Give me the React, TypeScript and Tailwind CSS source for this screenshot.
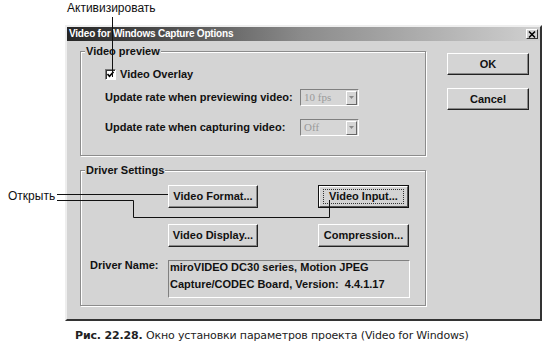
const ui = "font-['Liberation_Sans',Arial,sans-serif] font-bold text-[11px] text-[#111]";

function WinButton({ label, w, isDefault }: { label: string; w: string; isDefault?: boolean }) {
  if (isDefault) {
    return (
      <div className={`${w} h-[23px] border border-[#111] flex`}>
        <div className="flex-1 flex items-center justify-center border border-t-white border-l-white border-b-[#555] border-r-[#555] bg-[#d4d4d4]">
          <span className="px-[5px] leading-[13px] outline outline-1 outline-dotted outline-[#333]">{label}</span>
        </div>
      </div>
    );
  }
  return (
    <div
      className={`${w} h-[23px] flex items-center justify-center bg-[#d4d4d4] border border-t-white border-l-white border-b-[#222] border-r-[#222] shadow-[inset_-1px_-1px_0_#888]`}
    >
      {label}
    </div>
  );
}

function Combo({ value }: { value: string }) {
  return (
    <div className="w-[59px] h-[17px] flex items-center border border-t-[#808080] border-l-[#808080] border-b-white border-r-white bg-[#d6d6d6]">
      <span className="flex-1 pl-[3px] font-normal text-[#9a9a9a] font-['Liberation_Serif',serif] text-[11px]">{value}</span>
      <div className="w-[11px] h-[14px] mr-[1px] flex items-center justify-center border border-t-white border-l-white border-b-[#666] border-r-[#666]">
        <svg width="5" height="3" viewBox="0 0 5 3">
          <path d="M0 0H5L2.5 3Z" fill="#8a8a8a" />
        </svg>
      </div>
    </div>
  );
}

function Group({ title, h, children }: { title: string; h: string; children: React.ReactNode }) {
  return (
    <div className={`w-[346px] ${h} border border-[#8c8c8c] shadow-[inset_1px_1px_0_#fff,1px_1px_0_#fff]`}>
      <div className="w-fit -mt-[7px] ml-[4px] px-[1px] bg-[#d4d4d4] leading-[13px]">{title}</div>
      {children}
    </div>
  );
}

export default function App() {
  return (
    <div className="relative w-[542px] h-[350px] bg-white overflow-hidden">
      <div className="h-[25px] pl-[67px] pt-[1px] font-['Liberation_Sans',Arial,sans-serif] text-[12px] leading-[14px] text-[#111]">
        Активизировать
      </div>

      <div className={`ml-[65px] w-[477px] h-[296px] bg-[#d4d4d4] border-2 border-t-[#eeeeee] border-l-[#eeeeee] border-b-[#333] border-r-[#333] ${ui}`}>
        <div className="h-[14px] flex items-center justify-between pl-[2px] pr-[2px] bg-linear-to-r from-[#262626] via-[#8c8c8c] to-[#d0d0d0]">
          <span className="text-white text-[10px] leading-[12px] tracking-[-0.2px]">Video for Windows Capture Options</span>
          <div className="w-[12px] h-[10px] flex items-center justify-center bg-[#d4d4d4] border border-t-white border-l-white border-b-[#333] border-r-[#333]">
            <svg width="8" height="7" viewBox="0 0 8 7">
              <path d="M1 0.5L7 6.5M7 0.5L1 6.5" stroke="#000" strokeWidth="1.5" />
            </svg>
          </div>
        </div>

        <div className="flex pl-[13px] pt-[10px] gap-[21px]">
          <div className="flex flex-col">
            <Group title="Video preview" h="h-[105px]">
              <div className="flex items-center mt-[10px] pl-[24px] h-[13px]">
                <div className="w-[11px] h-[11px] flex items-center justify-center bg-white border border-t-[#777] border-l-[#777] border-b-white border-r-white shadow-[inset_1px_1px_0_#333]">
                  <svg width="7" height="7" viewBox="0 0 7 7">
                    <path d="M0.5 3L2.5 5.2L6.5 0.8" stroke="#000" strokeWidth="1.6" fill="none" />
                  </svg>
                </div>
                <span className="ml-[4px]">Video Overlay</span>
              </div>
              <div className="flex items-center mt-[8px] pl-[24px] h-[17px]">
                <span className="w-[195px]">Update rate when previewing video:</span>
                <Combo value="10 fps" />
              </div>
              <div className="flex items-center mt-[13px] pl-[24px] h-[17px]">
                <span className="w-[195px]">Update rate when capturing video:</span>
                <Combo value="Off" />
              </div>
            </Group>

            <div className="mt-[14px]">
              <Group title="Driver Settings" h="h-[136px]">
                <div className="flex mt-[8px] pl-[87px] gap-[60px]">
                  <WinButton label="Video Format..." w="w-[90px]" />
                  <WinButton label="Video Input..." w="w-[91px]" isDefault />
                </div>
                <div className="flex mt-[16px] pl-[87px] gap-[60px]">
                  <WinButton label="Video Display..." w="w-[90px]" />
                  <WinButton label="Compression..." w="w-[91px]" />
                </div>
                <div className="flex items-start mt-[13px] pl-[9px]">
                  <span className="w-[78px] leading-[11px]">Driver Name:</span>
                  <div className="w-[242px] h-[38px] border border-t-[#808080] border-l-[#808080] border-b-white border-r-white">
                    <div className="-mt-[2px] pl-[1px] leading-[17px]">
                      miroVIDEO DC30 series, Motion JPEG
                      <br />
                      Capture/CODEC Board, Version:&nbsp; 4.4.1.17
                    </div>
                  </div>
                </div>
              </Group>
            </div>
          </div>

          <div className="flex flex-col mt-[2px] gap-[13px]">
            <div className="w-[82px] h-[22px] flex items-center justify-center border border-t-white border-l-white border-b-[#222] border-r-[#222] shadow-[inset_-1px_-1px_0_#888]">
              OK
            </div>
            <div className="w-[82px] h-[22px] flex items-center justify-center border border-t-white border-l-white border-b-[#222] border-r-[#222] shadow-[inset_-1px_-1px_0_#888]">
              Cancel
            </div>
          </div>
        </div>
      </div>

      <p className="mt-[8px] pl-[75px] font-['DejaVu_Sans',Verdana,sans-serif] text-[11px] leading-[14px] tracking-[-0.15px] text-[#222]">
        <b>Рис. 22.28.</b> Окно установки параметров проекта (Video for Windows)
      </p>

      <span className="absolute left-[8px] top-[189px] font-['Liberation_Sans',Arial,sans-serif] text-[12px] leading-[14px] text-[#111]">
        Открыть
      </span>
      <svg className="absolute inset-0 pointer-events-none" width="542" height="350" viewBox="0 0 542 350">
        <path d="M112.5 17V77" stroke="#111" strokeWidth="1" fill="none" />
        <path d="M57 194.5H168" stroke="#111" strokeWidth="1" fill="none" />
        <path d="M57 200.5H133.5V217.5H329.5V200" stroke="#111" strokeWidth="1" fill="none" />
      </svg>
    </div>
  );
}
